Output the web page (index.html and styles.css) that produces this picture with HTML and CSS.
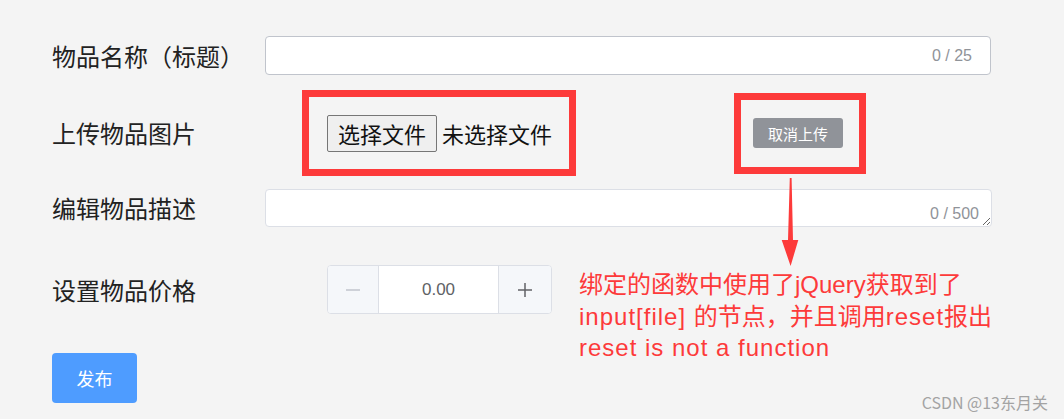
FILE: index.html
```html
<!DOCTYPE html>
<html lang="zh-CN">
<head>
  <meta charset="UTF-8" />
  <meta name="viewport" content="width=device-width, initial-scale=1.0"/>
  <title>发布物品</title>
  <link rel="stylesheet" href="styles.css">
</head>
<body>
  <div class="page">
    <!-- 物品名称 -->
    <div class="row row-name">
      <label class="label">物品名称（标题）</label>
      <div class="field">
        <input class="input" type="text" maxlength="25">
        <span class="count">0 / 25</span>
      </div>
    </div>

    <!-- 上传图片 -->
    <div class="row row-upload">
      <label class="label">上传物品图片</label>
      <div class="mark upload-box">
        <button class="file-btn" type="button">选择文件</button>
        <span class="file-name">未选择文件</span>
      </div>
      <div class="mark cancel-box">
        <button class="cancel-btn" type="button">取消上传</button>
      </div>
    </div>

    <!-- 描述 -->
    <div class="row row-desc">
      <label class="label">编辑物品描述</label>
      <div class="field field-area">
        <textarea class="textarea" maxlength="500"></textarea>
        <span class="count count-area">0 / 500</span>
      </div>
    </div>

    <!-- 价格 -->
    <div class="row row-price">
      <label class="label">设置物品价格</label>
      <div class="stepper">
        <span class="step step-minus">
          <svg width="16" height="16" viewBox="0 0 16 16"><line x1="1" y1="8" x2="15" y2="8" stroke="#c0c4cc" stroke-width="1.5"/></svg>
        </span>
        <span class="step-value">0.00</span>
        <span class="step step-plus">
          <svg width="16" height="16" viewBox="0 0 16 16"><line x1="1" y1="8" x2="15" y2="8" stroke="#606266" stroke-width="1.5"/><line x1="8" y1="1" x2="8" y2="15" stroke="#606266" stroke-width="1.5"/></svg>
        </span>
      </div>
    </div>

    <button class="btn-submit" type="button">发布</button>

    <!-- 标注：箭头和说明 -->
    <svg class="arrow" width="20" height="92" viewBox="0 0 20 92">
      <polygon points="9.8,2 11.6,2 13,64 18.3,64 10.6,90 1.7,64 8,64" fill="#fd3a3a"/>
    </svg>
    <div class="note">
      <div>绑定的函数中使用了jQuery获取到了</div>
      <div><span class="en">input[file] </span>的节点，并且调用<span class="en">reset</span>报出</div>
      <div class="en">reset is not a function</div>
    </div>

    <div class="watermark">CSDN @13东月关</div>
  </div>
</body>
</html>
```

FILE: styles.css
```css
/* Reinicio básico */
* {
  box-sizing: border-box;
}
body {
  margin: 0;
  background: #f4f4f4;
  font-family: "Noto Sans CJK SC", sans-serif;
}

.page {
  position: relative;
  width: 1064px;
  height: 419px;
  padding: 36px 0 0 52px;
  overflow: hidden;
}

/* Filas del formulario */
.row {
  display: flex;
  align-items: center;
}
.label {
  width: 213px;
  flex-shrink: 0;
  font-size: 24px;
  line-height: 1;
  color: #222;
}
.row-name   { height: 39px; }
.row-upload { height: 86px; margin-top: 15px; }
.row-desc   { height: 38px; margin-top: 13px; }
.row-price  { height: 49px; margin-top: 38px; }

/* Campos de texto con contador */
.field {
  position: relative;
  width: 726px;
  height: 39px;
}
.input {
  width: 100%;
  height: 100%;
  border: 1px solid #c0c4cc;
  border-radius: 4px;
  background: #fff;
  padding: 0 15px;
  outline: none;
}
.count {
  position: absolute;
  right: 19px;
  top: 50%;
  transform: translateY(-50%);
  font-family: "Liberation Sans", sans-serif;
  font-size: 16px;
  color: #909399;
}
.field-area {
  width: 727px;
  height: 38px;
}
.textarea {
  display: block;
  width: 100%;
  height: 38px;
  border: 1px solid #dcdfe6;
  border-radius: 4px;
  background: #fff;
  resize: vertical;
  outline: none;
}
.count-area {
  top: auto;
  transform: none;
  right: 13px;
  bottom: 5px;
  line-height: 17px;
}

/* Recuadros rojos de la captura */
.mark {
  border: 7px solid #fd3a3a;
  display: flex;
  align-items: center;
}
.upload-box {
  margin-left: 37px;
  width: 274px;
  height: 86px;
  padding-left: 18px;
}
.file-btn {
  height: 37px;
  width: 110px;
  padding: 0;
  font-family: "Noto Sans CJK SC", sans-serif;
  font-size: 22px;
  color: #111;
  background: #efefef;
  border: 1px solid #767676;
  border-radius: 2px;
}
.file-name {
  margin-left: 5px;
  font-size: 22px;
  color: #111;
}
.cancel-box {
  margin-left: 158px;
  width: 132px;
  height: 81px;
  padding-left: 12px;
}
.cancel-btn {
  width: 90px;
  height: 30px;
  padding: 0;
  border: none;
  border-radius: 3px;
  background: #909399;
  color: #fff;
  font-family: "Noto Sans CJK SC", sans-serif;
  font-size: 15px;
}

/* Contador numérico */
.stepper {
  margin-left: 62px;
  display: flex;
  width: 225px;
  height: 49px;
  border: 1px solid #dcdfe6;
  border-radius: 4px;
  background: #fff;
  overflow: hidden;
}
.step {
  display: flex;
  align-items: center;
  justify-content: center;
  background: #f5f7fa;
}
.step-minus {
  width: 51px;
  border-right: 1px solid #dcdfe6;
}
.step-plus {
  width: 53px;
  border-left: 1px solid #dcdfe6;
}
.step-value {
  flex: 1;
  display: flex;
  align-items: center;
  justify-content: center;
  font-family: "Liberation Sans", sans-serif;
  font-size: 17px;
  color: #606266;
}

/* Botón publicar */
.btn-submit {
  display: block;
  margin-top: 39px;
  width: 85px;
  height: 50px;
  border: none;
  border-radius: 4px;
  background: #4e9cff;
  color: #fff;
  font-family: "Noto Sans CJK SC", sans-serif;
  font-size: 18px;
}

/* Anotaciones */
.arrow {
  position: absolute;
  left: 780px;
  top: 176px;
}
.note {
  position: absolute;
  left: 579px;
  top: 269px;
  font-family: "Liberation Sans", "Noto Sans CJK SC", sans-serif;
  font-size: 24px;
  line-height: 31.5px;
  color: #fd3a3a;
  white-space: nowrap;
}
.note .en {
  letter-spacing: 1px;
}
.watermark {
  position: absolute;
  right: 16px;
  top: 391px;
  font-size: 16px;
  line-height: 22px;
  color: #a3a3a3;
}
```
